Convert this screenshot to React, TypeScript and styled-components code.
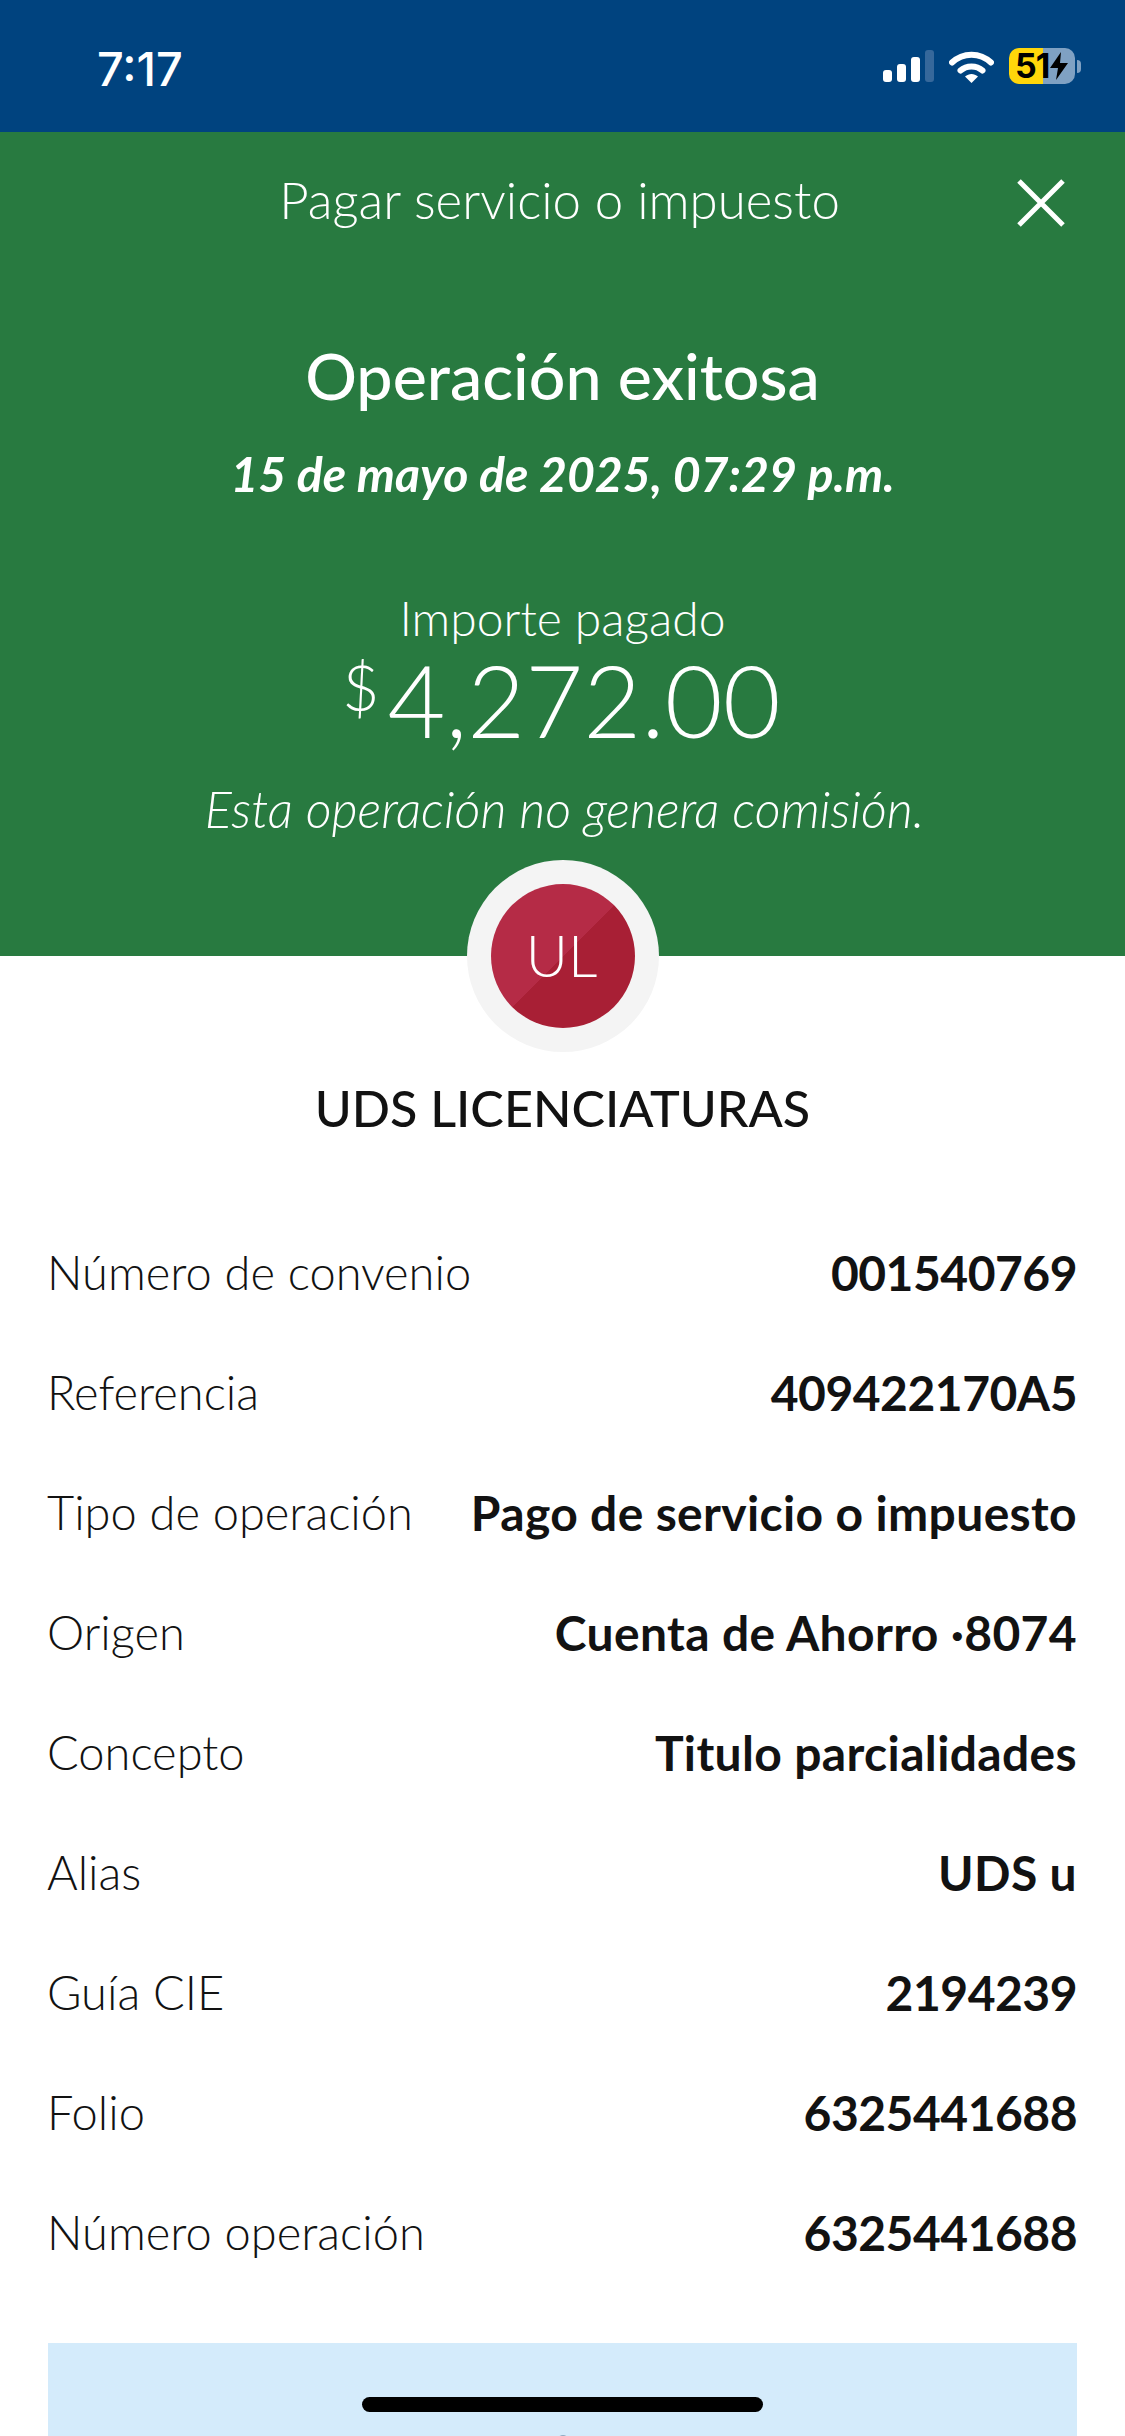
import styled, { createGlobalStyle } from "styled-components";

const GlobalStyle = createGlobalStyle`
  html, body {
    margin: 0;
    width: 1125px;
    height: 2436px;
    overflow: hidden;
    background-color: #fff;
  }
`;

const Screen = styled.div`
  position: relative;
  width: 1125px;
  height: 2436px;
  overflow: hidden;
  font-family: "Lato", "Liberation Sans", sans-serif;
  color: #121212;
`;

const StatusBar = styled.div`
  display: flex;
  align-items: center;
  justify-content: space-between;
  height: 132px;
  padding: 0 44px 0 97px;
  box-sizing: border-box;
  background-color: #00437f;
  color: #fff;
`;

const Clock = styled.div`
  padding-top: 4px;
  font-family: "Inter", sans-serif;
  font-size: 47px;
  font-weight: 500;
`;

const StatusIcons = styled.div`
  display: flex;
  align-items: center;
  gap: 15px;
`;

const Battery = styled.div`
  display: flex;
  align-items: center;
  width: 66px;
  height: 36px;
  padding-left: 6px;
  box-sizing: border-box;
  border-radius: 10px;
  background: linear-gradient(90deg, #ffd60a 34px, #7fa1c3 34px);
  color: #000;
  font-family: "Inter", sans-serif;
  font-size: 34px;
  font-weight: 700;
  letter-spacing: -1px;
  line-height: 36px;
`;

const BatteryWrap = styled.div`
  display: flex;
  align-items: center;
  gap: 2px;
`;

const BatteryCap = styled.div`
  width: 4px;
  height: 13px;
  border-radius: 0 4px 4px 0;
  background-color: #7fa1c3;
`;

const Hero = styled.section`
  height: 824px;
  background-color: #287a40;
  color: #fff;
  text-align: center;
`;

const NavBar = styled.div`
  position: relative;
  height: 142px;
  padding-right: 6px;
  font-size: 51px;
  font-weight: 300;
  line-height: 136px;
`;

const CloseButton = styled.div`
  position: absolute;
  top: 47px;
  right: 60px;
  display: flex;
`;

const Heading = styled.h1`
  margin: 61px 0 0;
  font-size: 64.5px;
  font-weight: 500;
  line-height: 80px;
`;

const DateLine = styled.div`
  margin-top: 28px;
  font-size: 48.2px;
  font-style: italic;
  font-weight: 700;
  line-height: 60px;
`;

const AmountLabel = styled.div`
  margin-top: 85px;
  font-size: 48px;
  font-weight: 300;
  line-height: 60px;
`;

const Amount = styled.div`
  display: flex;
  justify-content: center;
  margin-top: 1px;
  padding-right: 2px;
  font-size: 100px;
  font-weight: 300;
  line-height: 100px;
`;

const Currency = styled.span`
  margin-right: 8px;
  font-size: 64px;
  line-height: 76px;
`;

const Note = styled.div`
  margin-top: 30px;
  padding-left: 4px;
  font-size: 50.4px;
  font-style: italic;
  font-weight: 300;
  line-height: 60px;
`;

const Body = styled.section`
  display: flex;
  flex-direction: column;
  align-items: center;
`;

const AvatarRing = styled.div`
  display: flex;
  align-items: center;
  justify-content: center;
  width: 192px;
  height: 192px;
  margin-top: -96px;
  border-radius: 50%;
  background-color: #f4f4f4;
`;

const Avatar = styled.div`
  display: flex;
  align-items: center;
  justify-content: center;
  width: 144px;
  height: 144px;
  padding: 0 2px 4px 0;
  box-sizing: border-box;
  border-radius: 50%;
  background: linear-gradient(135deg, #b52b46 50%, #a81f35 50%);
  color: #fff;
  font-size: 58px;
  font-weight: 300;
`;

const Name = styled.div`
  margin-top: 26px;
  font-size: 50.3px;
  font-weight: 500;
  line-height: 60px;
`;

const Details = styled.div`
  align-self: stretch;
  margin-top: 74px;
  padding: 0 48px;
`;

const Row = styled.div`
  display: flex;
  align-items: center;
  justify-content: space-between;
  height: 120px;
`;

const Label = styled.span`
  margin-left: -1px;
  font-size: 47px;
  font-weight: 300;
`;

const Value = styled.span<{ $numeric: boolean }>`
  font-size: 48px;
  font-weight: 700;
  letter-spacing: ${(p) => (p.$numeric ? "-0.5px" : "0.35px")};
`;

const InfoBox = styled.div`
  display: flex;
  justify-content: center;
  align-self: stretch;
  height: 200px;
  padding-top: 92px;
  box-sizing: border-box;
  margin: 51px 48px 0;
  background-color: #d4ebfb;
`;

const InfoMark = styled.div`
  width: 12px;
  height: 40px;
  border-radius: 6px;
  background-color: #8fa9c0;
`;

const HomeIndicator = styled.div`
  position: absolute;
  left: 362px;
  bottom: 24px;
  width: 401px;
  height: 15px;
  border-radius: 8px;
  background-color: #000;
`;

const rows = [
  ["Número de convenio", "001540769"],
  ["Referencia", "409422170A5"],
  ["Tipo de operación", "Pago de servicio o impuesto"],
  ["Origen", "Cuenta de Ahorro ·8074"],
  ["Concepto", "Titulo parcialidades"],
  ["Alias", "UDS u"],
  ["Guía CIE", "2194239"],
  ["Folio", "6325441688"],
  ["Número operación", "6325441688"],
];

export default function App() {
  return (
    <Screen>
      <GlobalStyle />
      <StatusBar>
        <Clock>7:17</Clock>
        <StatusIcons>
          <svg width="51" height="32" viewBox="0 0 51 32">
            <rect x="0" y="20" width="9" height="12" rx="3" fill="#fff" />
            <rect x="14" y="14" width="9" height="18" rx="3" fill="#fff" />
            <rect x="28" y="7" width="9" height="25" rx="3" fill="#fff" />
            <rect x="42" y="0" width="9" height="32" rx="3" fill="#36689b" />
          </svg>
          <svg width="45" height="33" viewBox="0 0 45 33">
            <path d="M3 12.5C14 2 31 2 42 12.5" fill="none" stroke="#fff" strokeWidth="6" strokeLinecap="round" />
            <path d="M11.5 20.5C17.5 15 27.5 15 33.5 20.5" fill="none" stroke="#fff" strokeWidth="6" strokeLinecap="round" />
            <path d="M16 26.5C20 23 25 23 29 26.5L22.5 33Z" fill="#fff" />
          </svg>
          <BatteryWrap>
            <Battery>
              51
              <svg width="20" height="28" viewBox="0 0 20 28">
                <path d="M12 0L1 16H9L7 28L19 11H11Z" fill="#000" />
              </svg>
            </Battery>
            <BatteryCap />
          </BatteryWrap>
        </StatusIcons>
      </StatusBar>
      <Hero>
        <NavBar>
          Pagar servicio o impuesto
          <CloseButton>
            <svg width="48" height="48" viewBox="0 0 48 48">
              <path d="M2 2L46 46M46 2L2 46" stroke="#fff" strokeWidth="5" />
            </svg>
          </CloseButton>
        </NavBar>
        <Heading>Operación exitosa</Heading>
        <DateLine>15 de mayo de 2025, 07:29 p.m.</DateLine>
        <AmountLabel>Importe pagado</AmountLabel>
        <Amount>
          <Currency>$</Currency>
          4,272.00
        </Amount>
        <Note>Esta operación no genera comisión.</Note>
      </Hero>
      <Body>
        <AvatarRing>
          <Avatar>UL</Avatar>
        </AvatarRing>
        <Name>UDS LICENCIATURAS</Name>
        <Details>
          {rows.map(([label, value]) => (
            <Row key={label}>
              <Label>{label}</Label>
              <Value $numeric={/^\d/.test(value)}>{value}</Value>
            </Row>
          ))}
        </Details>
        <InfoBox>
          <InfoMark />
        </InfoBox>
      </Body>
      <HomeIndicator />
    </Screen>
  );
}
